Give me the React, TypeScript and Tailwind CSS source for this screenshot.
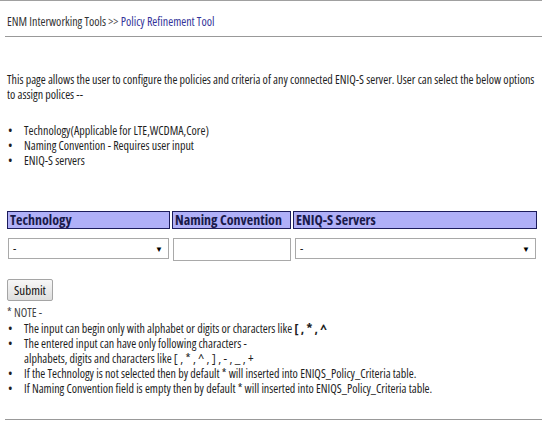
import React from "react";

const Bullet: React.FC<{ children: React.ReactNode }> = ({ children }) => (
  <li className="flex">
    <span className="w-[17px] shrink-0 pl-[1px]">•</span>
    <span>{children}</span>
  </li>
);

const FakeSelect: React.FC<{ className?: string }> = ({ className }) => (
  <div className={`relative h-[21px] border border-[#a9a9a9] bg-white ${className ?? ""}`}>
    <span className="absolute left-[4px] top-[3px] text-[12px] leading-[14px]">-</span>
    <span className="absolute right-[5px] top-[5px] text-[8px] leading-[10px] text-black">▼</span>
  </div>
);

export default function App() {
  return (
    <div className="w-[542px] h-[430px] overflow-hidden bg-white text-[12px] leading-[15px] text-[#1e1e1e] font-['Open_Sans',sans-serif] [font-stretch:75%]">
      <div className="border-t border-[#a0a0a0]" />

      {/* Breadcrumb */}
      <div className="pl-[7px] pt-[13px] h-[35px] text-[12px]">
        <span className="text-[#333]">ENM Interworking Tools</span>
        <span className="text-[#555]"> &gt;&gt; </span>
        <span className="text-[#333399]">Policy Refinement Tool</span>
      </div>
      <div className="ml-[5px] border-t border-[#999]" />

      {/* Intro */}
      <p className="pl-[7px] pr-[4px] mt-[35px]">
        This page allows the user to configure the policies and criteria of any connected ENIQ-S server. User can select the below
        options to assign polices --
      </p>

      <ul className="pl-[7px] mt-[21px]">
        <Bullet>Technology(Applicable for LTE,WCDMA,Core)</Bullet>
        <Bullet>Naming Convention - Requires user input</Bullet>
        <Bullet>ENIQ-S servers</Bullet>
      </ul>

      {/* Form table */}
      <div className="ml-[7px] mt-[43px] grid grid-cols-[163px_119px_244px] gap-x-[2px]">
        {["Technology", "Naming Convention", "ENIQ-S Servers"].map((h) => (
          <div
            key={h}
            className="h-[18px] border border-[#1c1c5c] bg-[#b0b0f8] pl-[2px] text-[14px] leading-[16px] font-bold text-[#1a1a4a] whitespace-nowrap overflow-hidden"
          >
            {h}
          </div>
        ))}
        <div className="pt-[9px] pl-[1px] pr-[1px]">
          <FakeSelect />
        </div>
        <div className="pt-[9px] pl-[1px]">
          <input className="block w-[118px] h-[23px] border border-[#a9a9a9] bg-white outline-none" />
        </div>
        <div className="pt-[9px] pl-[2px] pr-[1px]">
          <FakeSelect />
        </div>
      </div>

      {/* Submit */}
      <button className="ml-[7px] mt-[18px] h-[22px] px-[6px] border border-[#a5a5a5] rounded-[2px] bg-gradient-to-b from-[#f7f7f7] to-[#dedede] text-[13px] leading-[14px] font-normal text-[#111]">
        Submit
      </button>

      {/* Notes */}
      <div className="pl-[7px] mt-[4px] text-[#444]">* NOTE -</div>
      <ul className="pl-[7px] mt-[1px]">
        <Bullet>
          The input can begin only with alphabet or digits or characters like{" "}
          <span className="font-bold text-[13px]">[ , * , ^</span>
        </Bullet>
        <Bullet>
          <span>
            The entered input can have only following characters -
            <br />
            alphabets, digits and characters like{" "}
            <span className="text-[13px]">[ , * , ^ , ] , - , _ , +</span>
          </span>
        </Bullet>
        <Bullet>If the Technology is not selected then by default * will inserted into ENIQS_Policy_Criteria table.</Bullet>
        <Bullet>If Naming Convention field is empty then by default * will inserted into ENIQS_Policy_Criteria table.</Bullet>
      </ul>

      <div className="ml-[5px] mt-[23px] border-t border-[#999]" />
    </div>
  );
}
